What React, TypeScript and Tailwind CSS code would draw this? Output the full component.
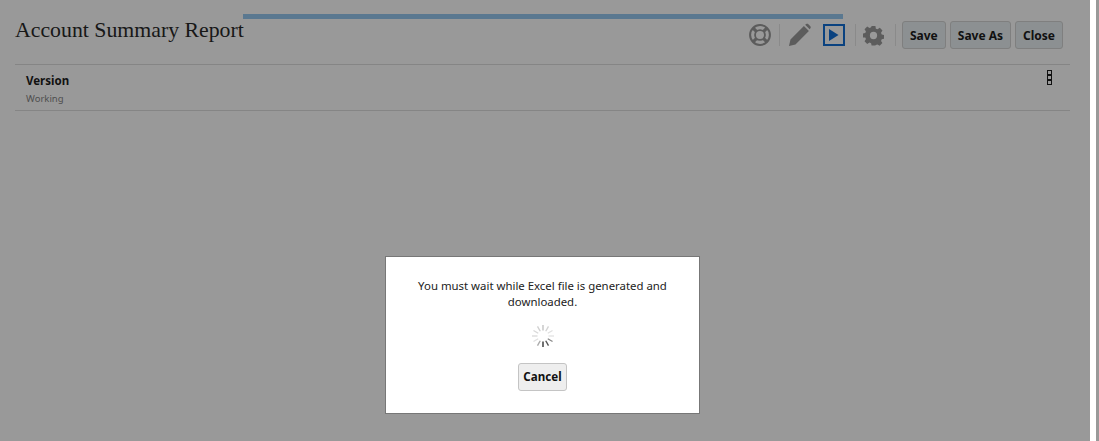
const SPOKES = [
  [0, "#c4c4c4"], [30, "#d4d4d4"], [60, "#e0e0e0"], [90, "#e4e4e4"], [120, "#8a8a8a"], [150, "#555555"],
  [180, "#333333"], [210, "#aaaaaa"], [240, "#e0e0e0"], [270, "#dcdcdc"], [300, "#d8d8d8"], [330, "#d0d0d0"],
] as const;

function Spinner() {
  return (
    <svg width="24" height="24" viewBox="0 0 24 24" className="block">
      {SPOKES.map(([a, c]) => (
        <line key={a} x1="12" y1="1" x2="12" y2="6.5" stroke={c} strokeWidth="1.4" transform={`rotate(${a} 12 12)`} />
      ))}
    </svg>
  );
}

function Lifebuoy() {
  return (
    <svg width="22" height="22" viewBox="0 0 24 24" fill="none" stroke="#5c5c5c" className="block">
      <circle cx="12" cy="12" r="10.800" strokeWidth="2.200" />
      <circle cx="12" cy="12" r="5.400" strokeWidth="2" />
      <path d="M4.500 4.500l3.800 3.800M19.500 4.500l-3.800 3.800M4.500 19.500l3.800-3.800M19.500 19.500l-3.800-3.800" strokeWidth="3.400" />
    </svg>
  );
}

function Pencil() {
  return (
    <svg width="23" height="24" viewBox="0 0 24 24" className="block">
      <path fill="#5c5c5c" d="M1 23.500 2.600 16.600 16.600 2.600 21.800 7.800 7.800 21.800ZM17.900 1.400 19 .6c.7-.5 1.400-.5 2 0l2.300 2.300c.6.6.6 1.400.1 2L22.600 6Z" />
    </svg>
  );
}

function Gear() {
  return (
    <svg width="21" height="21" viewBox="0 0 22 22" className="block">
      <path
        fill="#5c5c5c"
        fillRule="evenodd"
        d="M9 1h4l.5 2.800 1.700.7L17.600 3l2.800 2.800-1.500 2.400.7 1.700 2.400.6v4l-2.400.5-.7 1.700 1.400 2.200-2.800 2.800-2.400-1.400-1.700.7L13 21.500H9l-.5-2.400-1.700-.7-2.400 1.400-2.800-2.800 1.500-2.300-.7-1.700L0 13V9l2.400-.6.7-1.700L1.600 4.400 4.400 1.600l2.400 1.500 1.700-.7ZM11 7.200a3.800 3.800 0 1 0 0 7.600 3.800 3.800 0 0 0 0-7.600Z"
      />
    </svg>
  );
}

function Sep() {
  return <div className="h-[22px] w-px bg-[#8a8a8a]" />;
}

function ToolButton({ label }: { label: string }) {
  return (
    <button className="h-[28px] rounded-[3px] border border-[#7f7f7f] bg-[#8c9092] px-[7px] pt-px text-[12px] font-bold text-[#111] font-['Noto_Sans',sans-serif]">
      {label}
    </button>
  );
}

export default function App() {
  return (
    <div className="relative h-[441px] w-[1099px] overflow-hidden bg-[#999999] font-['Noto_Sans',sans-serif]">
      <div className="flex h-full w-[1090px] flex-col bg-[#999999] pl-[15px] pr-[20px]">
        <div className="relative flex h-[65px] items-start justify-between border-b border-[#858585]">
          <h1 className="mt-[16px] font-['Liberation_Serif',serif] text-[21.800px] leading-[28px] text-[#171717]">Account Summary Report</h1>
          <div className="absolute left-[228px] top-[14px] h-[5px] w-[600px] bg-[#5a7890]" />
          <div className="mr-[7px] mt-[21px] flex items-center">
            <Lifebuoy />
            <div className="mx-[8px]"><Sep /></div>
            <Pencil />
            <div className="ml-[12px] flex h-[22px] w-[22px] items-center justify-center border-2 border-[#0a4280]">
              <svg width="10" height="12" viewBox="0 0 10 12" className="block"><path fill="#0a4280" d="M0 0l9.500 6-9.500 6Z" /></svg>
            </div>
            <div className="ml-[10px] mr-[7px]"><Sep /></div>
            <Gear />
            <div className="ml-[11px] mr-[6px]"><Sep /></div>
            <div className="flex gap-[4px]">
              <ToolButton label="Save" />
              <ToolButton label="Save As" />
              <ToolButton label="Close" />
            </div>
          </div>
        </div>
        <div className="flex h-[46px] items-start justify-between border-b border-[#858585] pl-[11px] pr-[18px]">
          <div>
            <div className="mt-[7px] text-[11.500px] font-bold leading-[18px] text-[#111]">Version</div>
            <div className="mt-[2px] text-[9.500px] leading-[14px] text-[#4f4f4f]">Working</div>
          </div>
          <div className="mt-[5px] flex flex-col">
            <div className="h-[5px] w-[5px] border border-[#111]" />
            <div className="h-[5px] w-[5px] border border-[#111]" />
            <div className="h-[5px] w-[5px] border border-[#111]" />
          </div>
        </div>
      </div>
      <div className="absolute right-[3px] top-0 h-full w-[6px] bg-white" />
      <div className="absolute left-[385px] top-[256px] flex h-[158px] w-[315px] flex-col items-center border border-[#777] bg-white pt-[21px]">
        <p className="w-[270px] text-center text-[11.400px] leading-[16px] text-[#222]">You must wait while Excel file is generated and downloaded.</p>
        <div className="mt-[14px]"><Spinner /></div>
        <button className="mt-[15px] h-[28px] rounded-[3px] border border-[#c4c4c4] bg-[#eeeeee] px-[4px] text-[11.600px] font-bold text-[#111]">Cancel</button>
      </div>
    </div>
  );
}
